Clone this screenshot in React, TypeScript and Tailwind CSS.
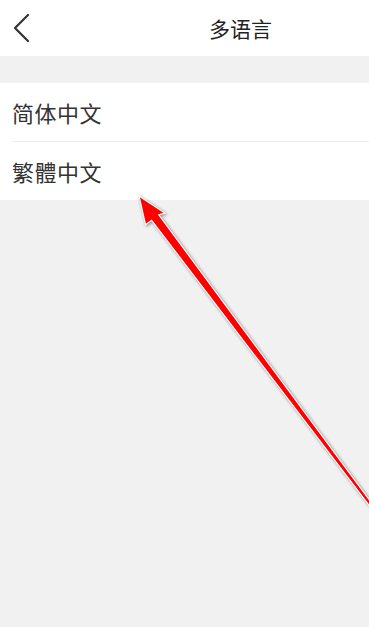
import React from "react";

const cjk = { fontFamily: '"Noto Sans CJK SC", "Noto Sans", sans-serif' };

function Row({ label, divider }: { label: string; divider?: boolean }) {
  return (
    <div className="relative h-[58px] flex items-center pl-[12px]">
      <span className="text-[22px] text-[#333] leading-none tracking-[0.5px]">{label}</span>
      {divider && <div className="absolute left-[12px] right-0 bottom-[-1px] h-px bg-[#ececec]" />}
    </div>
  );
}

export default function App() {
  return (
    <div className="relative w-[369px] h-[627px] overflow-hidden bg-[#f1f1f1]" style={cjk}>
      <header className="h-[56px] bg-white flex items-center">
        <svg width="18" height="30" viewBox="0 0 18 30" className="ml-[12px]">
          <path d="M16 2 L3 15 L16 28" fill="none" stroke="#333" strokeWidth="2.2" strokeLinecap="round" strokeLinejoin="round" />
        </svg>
        <h1 className="ml-[179px] text-[21px] text-[#222] leading-none">多语言</h1>
      </header>

      <div className="mt-[27px] bg-white">
        <Row label="简体中文" divider />
        <div className="h-px" />
        <Row label="繁體中文" />
      </div>

      <svg
        className="absolute inset-0 pointer-events-none drop-shadow-[1px_1px_1.5px_rgba(0,0,0,0.45)]"
        width="369"
        height="627"
        viewBox="0 0 369 627"
      >
        <polygon
          points="139,196 164.8,213 158.8,214.9 390.2,528.1 387.8,529.9 151.6,220.3 145.6,224.8"
          fill="#ff0000"
          stroke="#ffffff"
          strokeWidth="1.2"
          strokeLinejoin="miter"
        />
      </svg>
    </div>
  );
}
